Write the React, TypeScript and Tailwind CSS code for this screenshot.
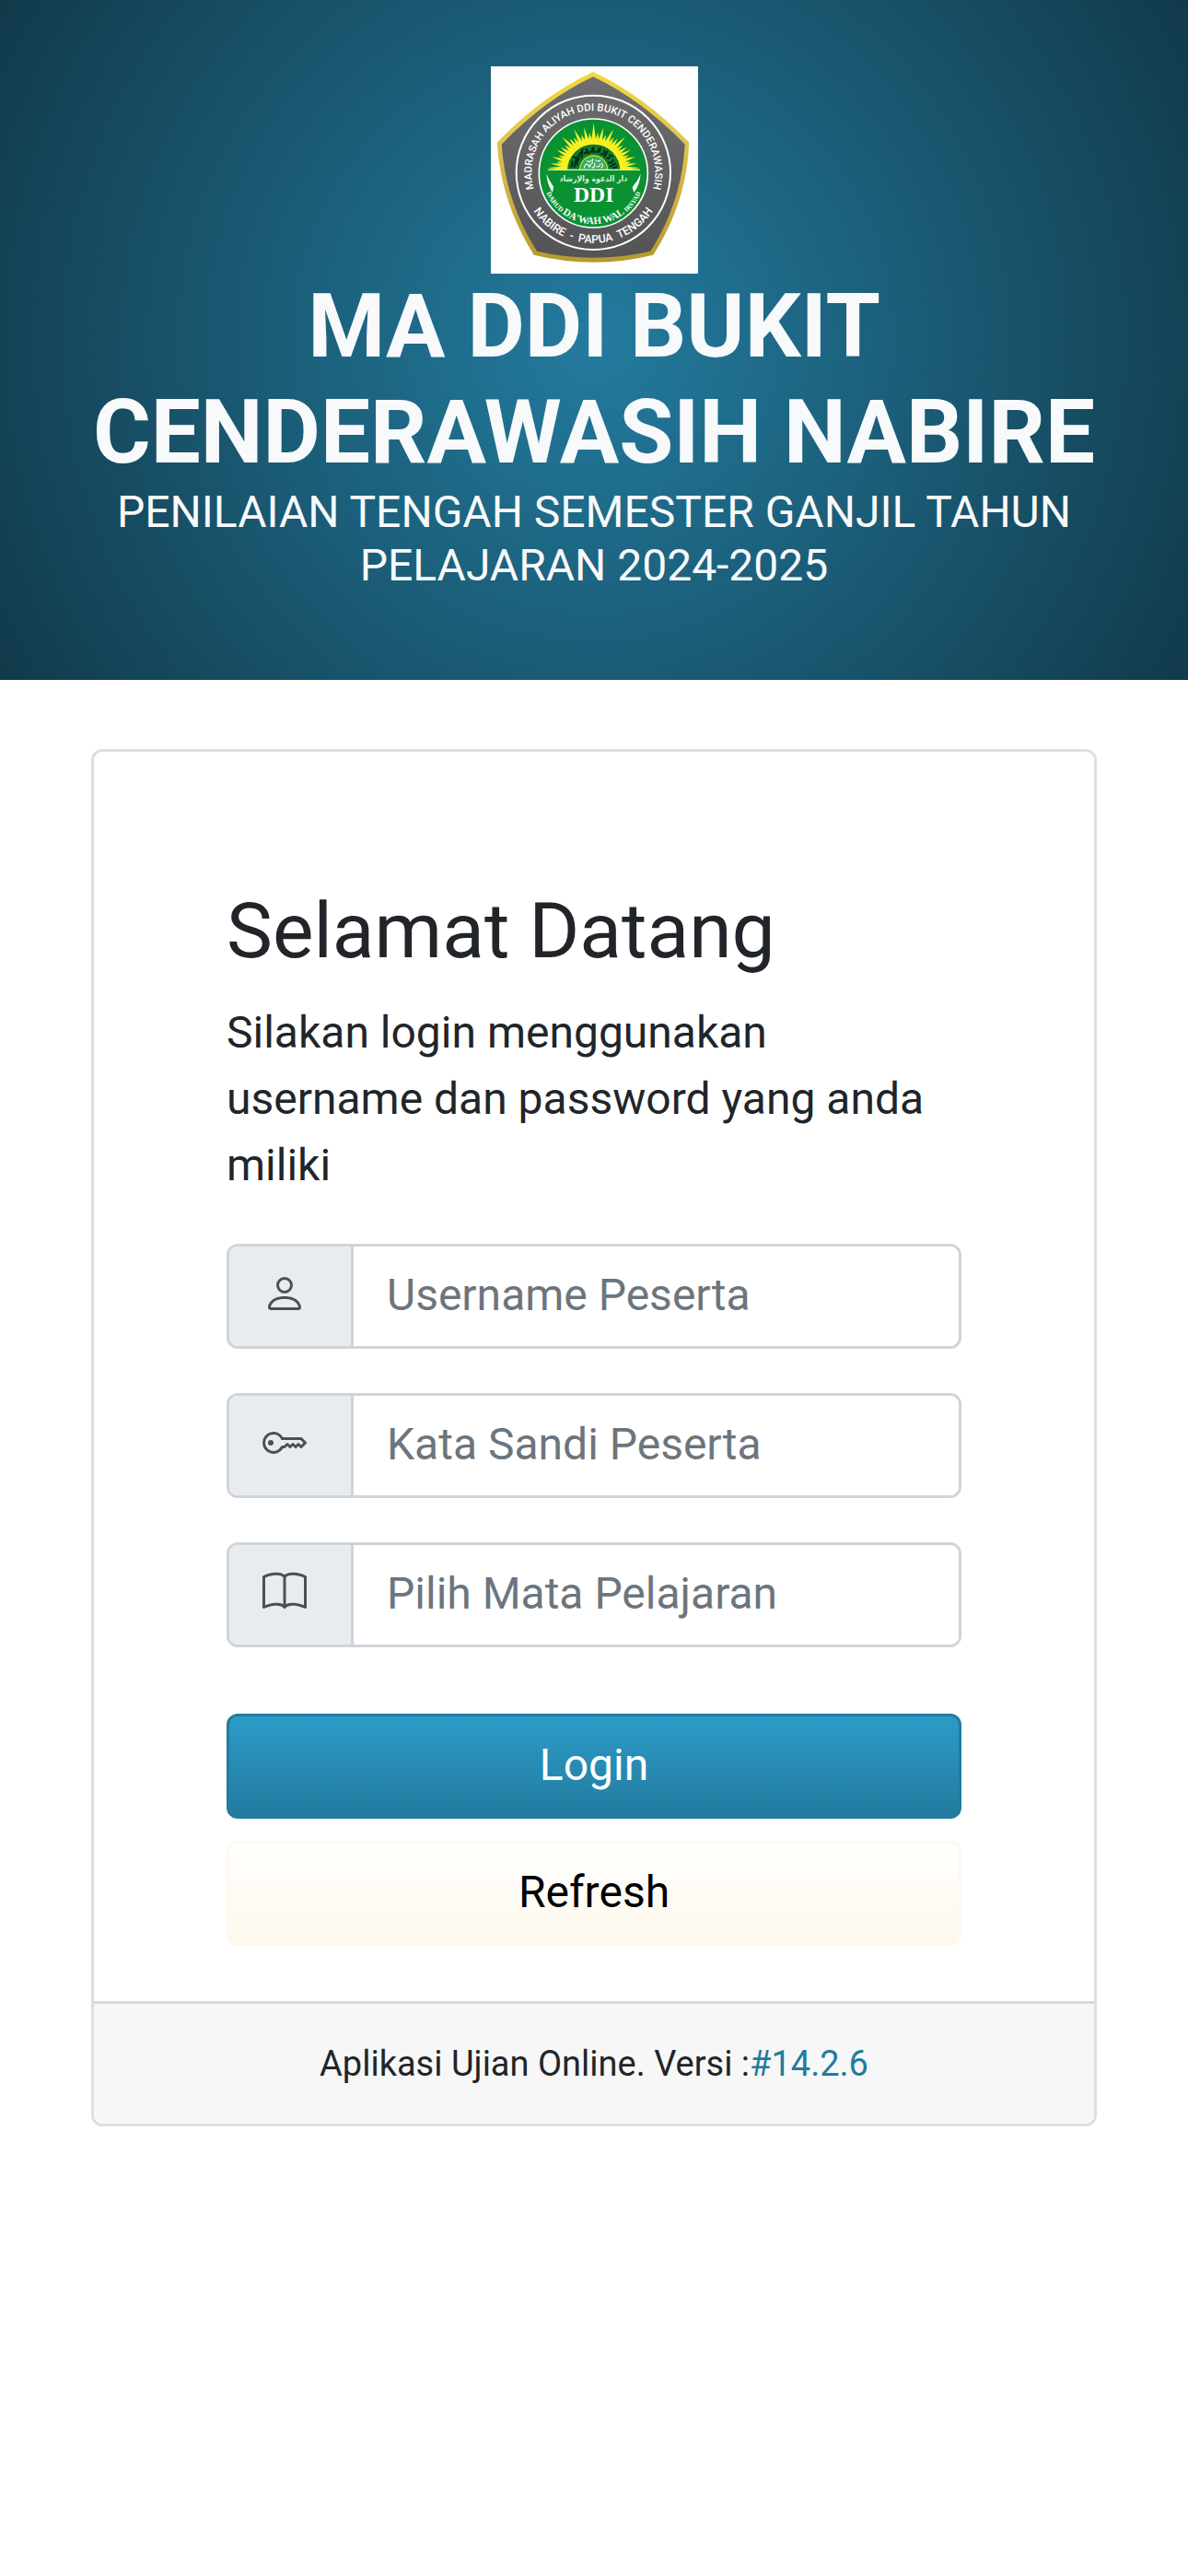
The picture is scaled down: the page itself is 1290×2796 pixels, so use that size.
import { BsBook, BsKey, BsPerson } from "react-icons/bs";

// sun rays on the left half: angle in degrees, length from the centre
const halfRays = [
  [96.5, 120],
  [103, 140],
  [109.5, 120],
  [116, 146],
  [122, 124],
  [128, 128],
  [134, 148],
  [140, 124],
  [146, 130],
  [152, 136],
  [158, 124],
  [163, 142],
  [168, 124],
  [172, 142],
  [178, 150],
];
const rays = [[90, 152], ...halfRays, ...halfRays.map(([a, r]) => [180 - a, r])];

function point(angle: number, r: number) {
  const rad = (angle * Math.PI) / 180;
  return `${(377 + r * Math.cos(rad)).toFixed(1)},${(372 - r * Math.sin(rad)).toFixed(1)}`;
}

function Logo() {
  return (
    <svg
      viewBox="42 36 675 675"
      className="h-[225px] w-[225px]"
      role="img"
      aria-label="Logo MA DDI Bukit Cenderawasih"
    >
      <defs>
        <linearGradient id="gold" x1="0" y1="0" x2="0" y2="1">
          <stop offset="0" stopColor="#f4d83c" />
          <stop offset="0.4" stopColor="#dcc250" />
          <stop offset="1" stopColor="#b59a2c" />
        </linearGradient>
        <linearGradient id="stone" x1="0" y1="0" x2="0" y2="1">
          <stop offset="0" stopColor="#6e6d6f" />
          <stop offset="1" stopColor="#545355" />
        </linearGradient>
        <path id="arcTop" d="M202 482 A201 201 0 1 1 550 482" />
        <path id="arcBottom" d="M158 461 A233 233 0 0 0 594 461" />
        <path id="arcMotto" d="M215 425 A167 167 0 0 0 538 425" />
        <clipPath id="sky">
          <rect x="200" y="200" width="360" height="172" />
        </clipPath>
      </defs>
      <rect x="42" y="36" width="675" height="675" fill="#fff" />
      <path
        d="M375 54 Q540 131 688 284 Q680 480 571 650 Q380 698 182 650 Q75 480 62 284 Q210 131 375 54 Z"
        fill="url(#gold)"
      />
      <path
        d="M375 70 Q532 144 674 290 Q664 478 562 638 Q380 680 192 638 Q90 478 77 290 Q218 144 375 70 Z"
        fill="url(#stone)"
      />
      <circle cx="376" cy="382" r="251" fill="none" stroke="#fff" strokeWidth="6" />
      <circle cx="376" cy="384" r="177" fill="#0a9132" stroke="#fff" strokeWidth="5" />

      <g fontFamily="Roboto, sans-serif" fontWeight="500" fill="#fff" textAnchor="middle">
        <text fontSize="34">
          <textPath href="#arcTop" startOffset="50%">MADRASAH ALIYAH DDI BUKIT CENDERAWASIH</textPath>
        </text>
        <text fontSize="37">
          <textPath href="#arcBottom" startOffset="50%">{"NABIRE \u00a0-\u00a0 PAPUA \u00a0TENGAH"}</textPath>
        </text>
      </g>

      <g clipPath="url(#sky)">
        {rays.map(([a, r]) => (
          <polygon key={a} points={`${point(a - 5, 90)} ${point(a, r)} ${point(a + 5, 90)}`} fill="#f8f020" />
        ))}
        <circle cx="377" cy="372" r="96" fill="#f8f020" />
        <circle cx="377" cy="376" r="86" fill="#0b7a30" />
        <g fill="none" stroke="#06200e" strokeWidth="5" strokeLinecap="round">
          <path d="M303 362 q8 -6 4 -16 M314 364 l6 -28 M324 356 q-4 -12 6 -20 M310 330 q8 8 16 0" />
          <path d="M330 328 q2 -14 10 -12 M338 332 l2 -26 M346 318 q8 4 10 -10 M352 306 l8 14" />
          <path d="M364 314 q8 4 8 -10 M376 316 l0 -16 M382 314 q10 4 10 -8 M396 316 l2 -16" />
          <path d="M402 322 q12 2 10 -12 M412 330 l10 -18 M420 336 q12 0 10 -12" />
          <path d="M426 350 q14 2 14 -10 M432 362 l16 -10 M440 368 l12 -6 M436 326 l2 4" />
        </g>
        <circle cx="377" cy="372" r="45" fill="#3aa962" stroke="#b9dc3a" strokeWidth="4" />
      </g>
      <path d="M228 373 H528" stroke="#e9f7a0" strokeWidth="4" />

      <g fill="none" stroke="#dff3e4" strokeWidth="4" strokeLinecap="round">
        <path d="M346 366 q4 -16 12 -10 q4 8 10 -2 M356 344 q6 8 12 -2 M374 338 l-2 14" />
        <path d="M372 366 q10 0 8 -14 M386 362 q10 4 12 -8 M384 342 q8 6 14 0 M404 352 q6 8 -2 14 M362 364 l4 -4" />
      </g>

      <g fill="#fff" textAnchor="middle">
        <text
          x="376"
          y="410"
          fontSize="26"
          fontWeight="700"
          fontFamily="'DejaVu Sans Condensed', sans-serif"
          fill="#d8f0dc"
        >
          دار الدعوة والإرشاد
        </text>
        <text x="377" y="477" fontSize="71" fontWeight="700" fontFamily="'Liberation Serif', serif">
          DDI
        </text>
        <text fontFamily="'Liberation Serif', serif" fontWeight="700">
          <textPath href="#arcMotto" startOffset="50%">
            <tspan fontSize="22">DARUD </tspan>
            <tspan fontSize="33">DA'WAH WAL </tspan>
            <tspan fontSize="21">IRSYAD</tspan>
          </textPath>
        </text>
      </g>
      <path d="M223 386 Q226 422 243 447 L246 428 Q233 410 223 386 Z" fill="#fff" />
      <path d="M530 386 Q527 422 508 447 L503 430 Q520 410 530 386 Z" fill="#fff" />
    </svg>
  );
}

const field = "flex h-[114px] overflow-hidden rounded-[12px] border-[3px] border-[#ced4da]";
const addon =
  "flex shrink-0 items-start border-r-[3px] border-[#ced4da] bg-[#e9ecef] pt-[27px] pr-12 pl-9 text-[#495057]";
const control =
  "w-full min-w-0 flex-1 appearance-none bg-white px-9 pb-0.5 text-[48px] text-[#212529] outline-none placeholder:text-[#6c757d] placeholder:opacity-100";
const button = "h-[114px] rounded-[12px] border-[3px] pb-0.5 text-[48px]";

function App() {
  return (
    <div className="min-h-screen bg-white font-[Roboto,sans-serif] text-[#212529]">
      <header className="bg-[radial-gradient(circle,#237b9f,#113a4a)] px-[99px] pt-18 pb-[95px] text-center text-[#f8f9fa]">
        <div className="flex justify-center">
          <Logo />
        </div>
        <h1 className="text-[96px] leading-[115px] font-bold">MA DDI BUKIT CENDERAWASIH NABIRE</h1>
        <p className="text-[48px] leading-[58px]">
          PENILAIAN TENGAH SEMESTER GANJIL TAHUN PELAJARAN 2024-2025
        </p>
      </header>

      <main className="px-[99px] pt-[75px]">
        <div className="overflow-hidden rounded-[12px] border-[3px] border-[#dfdfdf]">
          <form className="px-36 pt-36 pb-[60px]">
            <h2 className="mb-6 text-[84px] leading-[101px]">Selamat Datang</h2>
            <p className="mb-[49px] text-[48px] leading-[72px]">
              Silakan login menggunakan username dan password yang anda miliki
            </p>
            <div className="mb-18 flex flex-col gap-12">
              <div className={field}>
                <label htmlFor="username" className={addon} aria-label="Username">
                  <BsPerson size={48} />
                </label>
                <input id="username" type="text" placeholder="Username Peserta" className={control} />
              </div>
              <div className={field}>
                <label htmlFor="password" className={addon} aria-label="Kata sandi">
                  <BsKey size={48} />
                </label>
                <input id="password" type="password" placeholder="Kata Sandi Peserta" className={control} />
              </div>
              <div className={field}>
                <label htmlFor="mapel" className={addon} aria-label="Mata pelajaran">
                  <BsBook size={48} />
                </label>
                <input id="mapel" type="text" placeholder="Pilih Mata Pelajaran" className={control} />
              </div>
            </div>
            <div className="flex flex-col gap-6">
              <button
                type="button"
                className={`${button} border-[#217d9e] bg-[linear-gradient(#2c9bc8,#237b9f)] text-white`}
              >
                Login
              </button>
              <button
                type="button"
                className={`${button} border-[#fef9ee] bg-[linear-gradient(#ffffff,#fef8ec)] text-black`}
              >
                Refresh
              </button>
            </div>
          </form>
          <footer className="border-t-[3px] border-[#d8d8d8] bg-[#f7f7f7] py-9 text-center text-[38px] leading-[58px]">
            Aplikasi Ujian Online. Versi :
            <a href="#versi" className="text-[#237b9f]">
              #14.2.6
            </a>
          </footer>
        </div>
      </main>
    </div>
  );
}

export default App;
